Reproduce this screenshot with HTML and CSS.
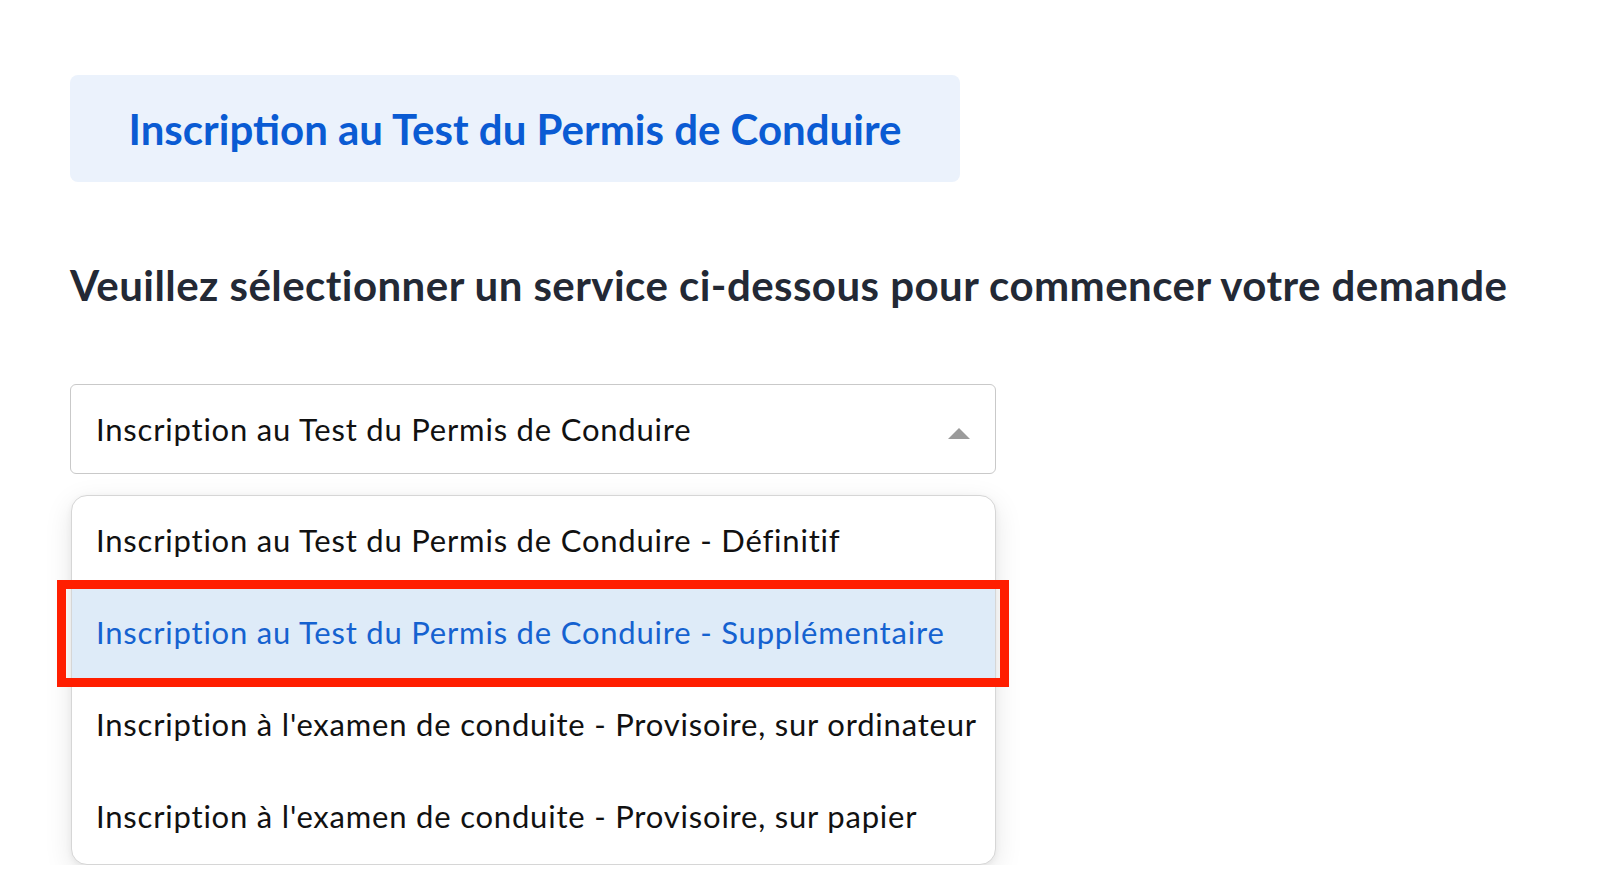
FILE: index.html
```html
<!DOCTYPE html>
<html lang="fr">
<head>
<meta charset="utf-8">
<title>Inscription au Test du Permis de Conduire</title>
<link rel="stylesheet" href="styles.css">
</head>
<body>
<main class="page">
  <div class="title-box">
    <h1 class="title">Inscription au Test du Permis de Conduire</h1>
  </div>
  <h2 class="prompt">Veuillez sélectionner un service ci-dessous pour commencer votre demande</h2>
  <div class="picker">
    <div class="select">
      <span class="select-value">Inscription au Test du Permis de Conduire</span>
      <svg class="caret" width="22" height="11" viewBox="0 0 22 11"><polygon points="0,11 11,0 22,11" fill="#9b9b9b"/></svg>
    </div>
    <ul class="menu">
      <li class="option">Inscription au Test du Permis de Conduire - Définitif</li>
      <li class="option active">Inscription au Test du Permis de Conduire - Supplémentaire</li>
      <li class="option">Inscription à l'examen de conduite - Provisoire, sur ordinateur</li>
      <li class="option">Inscription à l'examen de conduite - Provisoire, sur papier</li>
      <div class="highlight-frame"></div>
    </ul>
  </div>
</main>
</body>
</html>
```

FILE: styles.css
```css
* { box-sizing: border-box; }
html, body { margin: 0; padding: 0; background: #ffffff; }
body {
  font-family: "Lato", "Open Sans", "Liberation Sans", sans-serif;
  color: #111;
}
.page {
  padding: 75px 0 0 70px;
}
.title-box {
  display: inline-flex;
  align-items: center;
  justify-content: center;
  width: 890px;
  height: 107px;
  background: #ebf2fc;
  border-radius: 8px;
}
.title {
  margin: 0;
  font-size: 42px;
  font-weight: 700;
  color: #0a5bd3;
  line-height: 1;
}
.prompt {
  margin: 80px 0 0 0;
  font-size: 42px;
  letter-spacing: 0.45px;
  line-height: 46px;
  font-weight: 700;
  color: #232935;
}
.picker {
  margin-top: 76px;
  width: 926px;
}
.select {
  height: 90px;
  border: 1.5px solid #c9c9c9;
  border-radius: 6px;
  display: flex;
  align-items: center;
  justify-content: space-between;
  padding: 0 25px 0 25px;
}
.select-value {
  font-size: 31px;
  letter-spacing: 0.8px;
  color: #111;
}
.caret { display: block; margin-top: 8px; }
.menu {
  position: relative;
  list-style: none;
  margin: 21px 0 0 1px;
  padding: 0;
  border: 1px solid #d6d6d6;
  border-radius: 16px;
  background: #fff;
  box-shadow: 0 8px 28px rgba(0,0,0,0.10), 0 2px 6px rgba(0,0,0,0.06);
}
.option {
  height: 92px;
  display: flex;
  align-items: center;
  padding: 0 0 4px 24px;
  font-size: 31px;
  letter-spacing: 0.8px;
  color: #111;
}
.option.active {
  background: #deebf8;
  color: #1562d0;
}
.highlight-frame {
  position: absolute;
  left: -15px;
  top: 84px;
  width: 952px;
  height: 107px;
  border: 9px solid #ff1e00;
  pointer-events: none;
}
```
